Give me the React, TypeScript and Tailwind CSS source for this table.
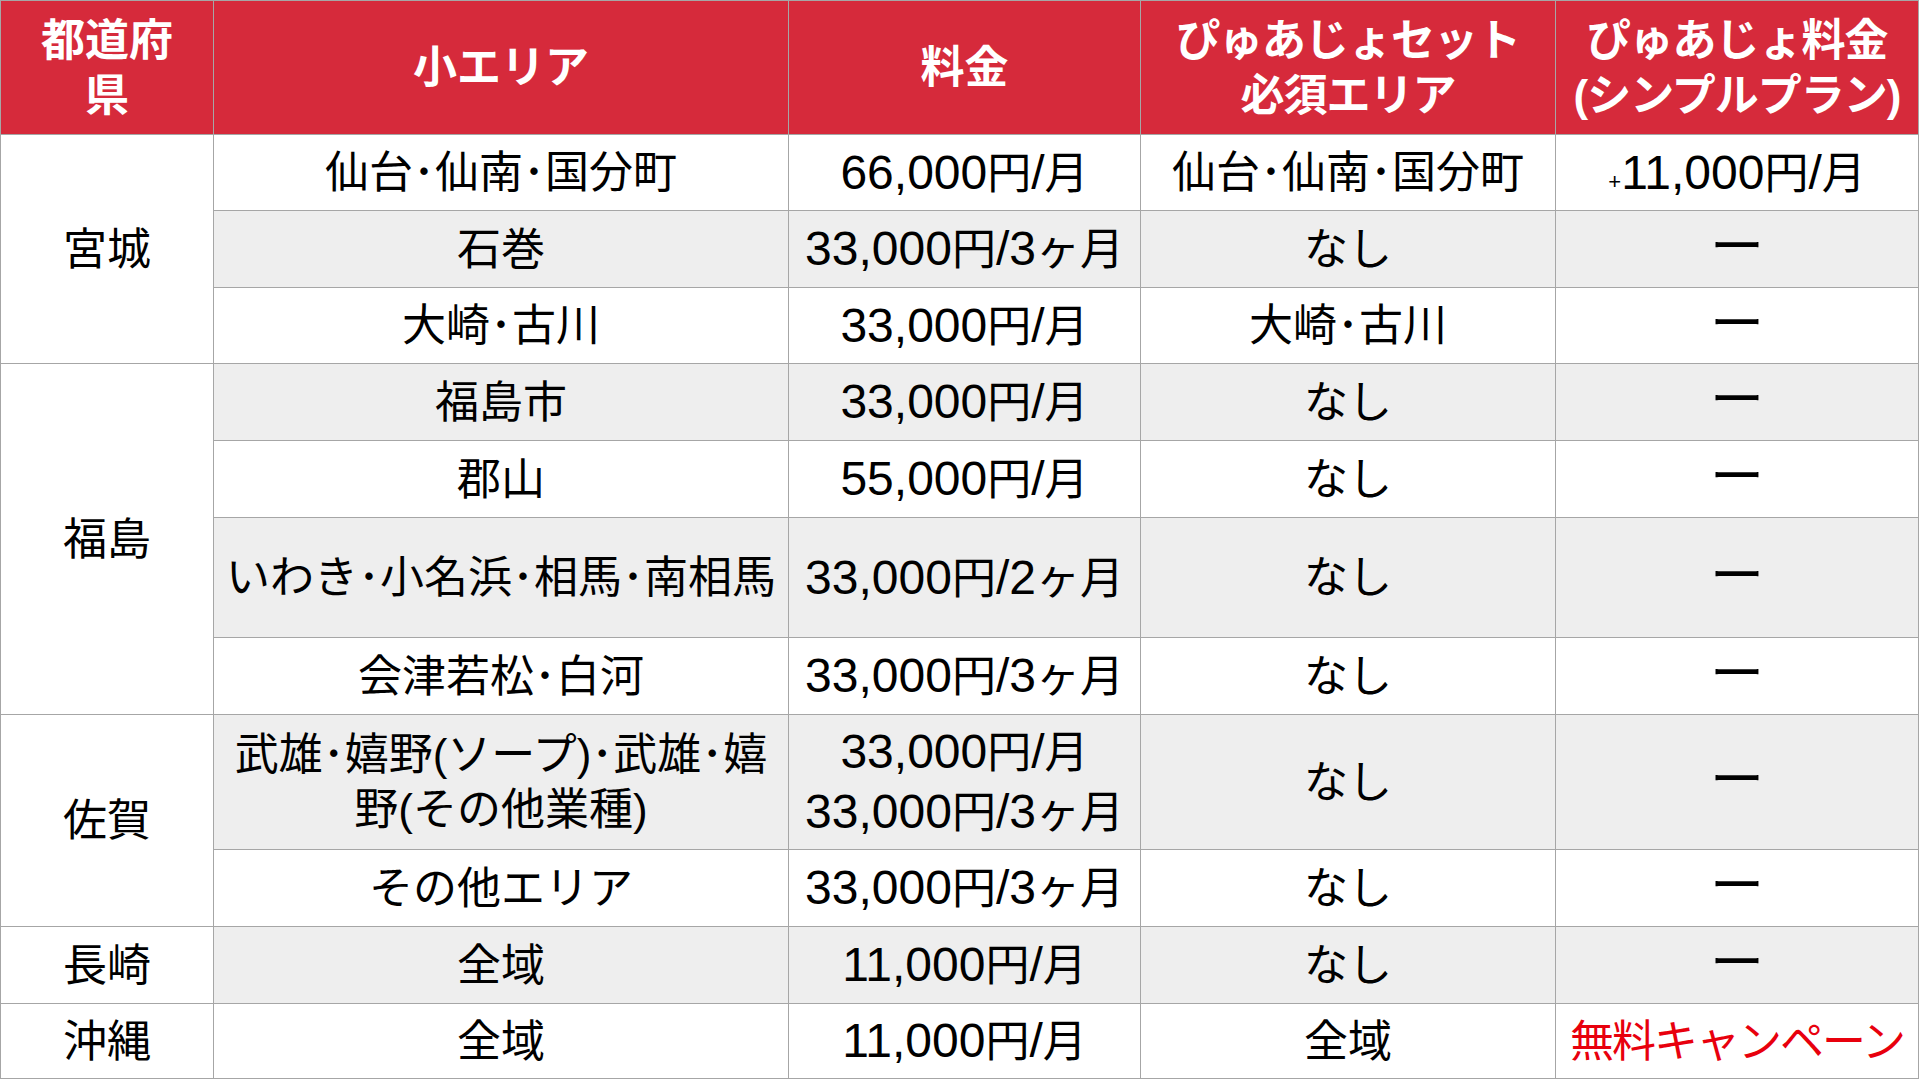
import React from "react";

type Row = {
  area: React.ReactNode;
  price: React.ReactNode;
  set: string;
  fee: React.ReactNode;
  h: string;
  gray: boolean;
};

// Latin digits in the reference run a bit larger than the kana/kanji
const Num = ({ text }: { text: string }) => (
  <>
    {text.split(/([0-9,/]+)/).map((part, i) =>
      /[0-9,/]/.test(part) ? (
        <span key={i} className="text-[48px]">
          {part}
        </span>
      ) : (
        <React.Fragment key={i}>{part}</React.Fragment>
      )
    )}
  </>
);

const Dash = () => <span className="text-[54px] leading-none">ー</span>;

const groups: { pref: string; span: string; rows: Row[] }[] = [
  {
    pref: "宮城",
    span: "row-span-3",
    rows: [
      {
        area: "仙台･仙南･国分町",
        price: <Num text="66,000円/月" />,
        set: "仙台･仙南･国分町",
        fee: (
          <span>
            <span className="text-[22px]">+</span>
            <Num text="11,000円/月" />
          </span>
        ),
        h: "h-[76px]",
        gray: false,
      },
      { area: "石巻", price: <Num text="33,000円/3ヶ月" />, set: "なし", fee: <Dash />, h: "h-[77px]", gray: true },
      { area: "大崎･古川", price: <Num text="33,000円/月" />, set: "大崎･古川", fee: <Dash />, h: "h-[76px]", gray: false },
    ],
  },
  {
    pref: "福島",
    span: "row-span-4",
    rows: [
      { area: "福島市", price: <Num text="33,000円/月" />, set: "なし", fee: <Dash />, h: "h-[77px]", gray: true },
      { area: "郡山", price: <Num text="55,000円/月" />, set: "なし", fee: <Dash />, h: "h-[77px]", gray: false },
      {
        area: "いわき･小名浜･相馬･南相馬",
        price: <Num text="33,000円/2ヶ月" />,
        set: "なし",
        fee: <Dash />,
        h: "h-[120px]",
        gray: true,
      },
      { area: "会津若松･白河", price: <Num text="33,000円/3ヶ月" />, set: "なし", fee: <Dash />, h: "h-[77px]", gray: false },
    ],
  },
  {
    pref: "佐賀",
    span: "row-span-2",
    rows: [
      {
        area: (
          <>
            武雄･嬉野(ソープ)･武雄･嬉
            <br />
            野(その他業種)
          </>
        ),
        price: (
          <>
            <Num text="33,000円/月" />
            <br />
            <Num text="33,000円/3ヶ月" />
          </>
        ),
        set: "なし",
        fee: <Dash />,
        h: "h-[135px]",
        gray: true,
      },
      { area: "その他エリア", price: <Num text="33,000円/3ヶ月" />, set: "なし", fee: <Dash />, h: "h-[77px]", gray: false },
    ],
  },
  {
    pref: "長崎",
    span: "row-span-1",
    rows: [{ area: "全域", price: <Num text="11,000円/月" />, set: "なし", fee: <Dash />, h: "h-[77px]", gray: true }],
  },
  {
    pref: "沖縄",
    span: "row-span-1",
    rows: [
      {
        area: "全域",
        price: <Num text="11,000円/月" />,
        set: "全域",
        fee: <span className="text-[#e8000d] tracking-[-2px]">無料キャンペーン</span>,
        h: "h-[75px]",
        gray: false,
      },
    ],
  },
];

const cell = "flex items-center justify-center text-center border-r border-b border-[#a6a6a6] leading-[1.25]";

export default function App() {
  return (
    <div
      className="w-[1919px] h-[1080px] bg-white overflow-hidden"
      style={{ fontFamily: "'Liberation Sans', 'Noto Sans CJK JP', sans-serif" }}
    >
      <div className="grid grid-cols-[213px_575px_352px_415px_363px] border-l border-t border-[#a6a6a6] text-[44px] text-black">
        {/* header */}
        {[
          <>
            都道府
            <br />県
          </>,
          "小エリア",
          "料金",
          <span className="tracking-[-1px]">
            ぴゅあじょセット
            <br />
            必須エリア
          </span>,
          <span className="tracking-[-1px]">
            ぴゅあじょ料金
            <br />
            (シンプルプラン)
          </span>,
        ].map((h, i) => (
          <div key={i} className={`${cell} h-[134px] bg-[#d62a3b] text-white font-bold text-[44px]`}>
            <div>{h}</div>
          </div>
        ))}

        {groups.map((g) => (
          <React.Fragment key={g.pref}>
            <div className={`${cell} ${g.span} bg-white`}>{g.pref}</div>
            {g.rows.map((r, i) => {
              const bg = r.gray ? "bg-[#eeeeee]" : "bg-white";
              return (
                <React.Fragment key={i}>
                  <div className={`${cell} ${r.h} ${bg}`}>
                    <div>{r.area}</div>
                  </div>
                  <div className={`${cell} ${r.h} ${bg}`}>
                    <div>{r.price}</div>
                  </div>
                  <div className={`${cell} ${r.h} ${bg}`}>
                    <div>{r.set}</div>
                  </div>
                  <div className={`${cell} ${r.h} ${bg}`}>
                    <div>{r.fee}</div>
                  </div>
                </React.Fragment>
              );
            })}
          </React.Fragment>
        ))}
      </div>
    </div>
  );
}
